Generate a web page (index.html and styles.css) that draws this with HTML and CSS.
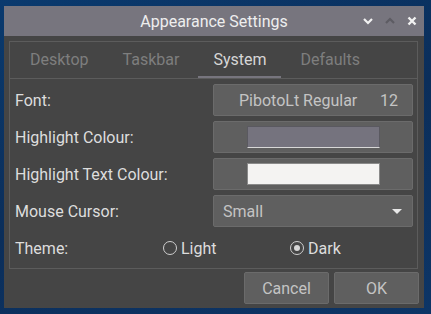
FILE: index.html
```html
<!DOCTYPE html>
<html lang="en">
<head>
    <meta charset="UTF-8">
    <title>Appearance Settings</title>
    <link rel="stylesheet" href="styles.css">
</head>
<body>
    <div class="window">
        <div class="titlebar">
            <span class="title">Appearance Settings</span>
            <div class="controls">
                <svg class="ctl" width="10" height="8" viewBox="0 0 10 8"><path d="M1 2 L5 6 L9 2" stroke="#f2f2f2" stroke-width="2.2" fill="none"/></svg>
                <svg class="ctl dim" width="10" height="8" viewBox="0 0 10 8"><path d="M1 6 L5 2 L9 6" stroke="#5d5c63" stroke-width="2.2" fill="none"/></svg>
                <svg class="ctl" width="10" height="10" viewBox="0 0 10 10"><path d="M1.5 1.5 L8.5 8.5 M8.5 1.5 L1.5 8.5" stroke="#f2f2f2" stroke-width="2.4" fill="none"/></svg>
            </div>
        </div>
        <div class="notebook">
            <div class="tabs">
                <span class="tab">Desktop</span>
                <span class="tab">Taskbar</span>
                <span class="tab active">System</span>
                <span class="tab">Defaults</span>
            </div>
            <div class="page">
                <div class="row">
                    <span class="label">Font:</span>
                    <div class="btn font-btn"><span>PibotoLt Regular</span><span class="size">12</span></div>
                </div>
                <div class="row">
                    <span class="label">Highlight Colour:</span>
                    <div class="btn swatch-btn"><span class="swatch hl"></span></div>
                </div>
                <div class="row">
                    <span class="label">Highlight Text Colour:</span>
                    <div class="btn swatch-btn"><span class="swatch hl-text"></span></div>
                </div>
                <div class="row">
                    <span class="label">Mouse Cursor:</span>
                    <div class="btn combo"><span>Small</span><span class="arrow"></span></div>
                </div>
                <div class="row">
                    <span class="label theme-label">Theme:</span>
                    <label class="radio light"><span class="dot"></span>Light</label>
                    <label class="radio"><span class="dot checked"></span>Dark</label>
                </div>
            </div>
        </div>
        <div class="actions">
            <div class="btn action">Cancel</div>
            <div class="btn action">OK</div>
        </div>
    </div>
</body>
</html>
```
FILE: styles.css
```css
body {
    margin: 0;
    width: 431px;
    height: 314px;
    overflow: hidden;
    background: linear-gradient(160deg, #0a3a6e 0%, #0b2e5a 50%, #0d3566 100%);
    font-family: Roboto, 'Liberation Sans', sans-serif;
}
.window {
    margin: 6px 0 0 4px;
    width: 420px;
    height: 302px;
    background: #454545;
}
.titlebar {
    height: 30px;
    background: #77757e;
    position: relative;
    display: flex;
    align-items: center;
    justify-content: center;
}
.title {
    color: #eeeeee;
    font-size: 16px;
}
.controls {
    position: absolute;
    right: 7px;
    top: 0;
    height: 30px;
    display: flex;
    align-items: center;
    gap: 12px;
}
.notebook {
    margin: 5px 6px 0 5px;
    border: 1px solid #5c5c5c;
    height: 226px;
}
.tabs {
    height: 36px;
    border-bottom: 1px solid #5c5c5c;
    display: flex;
    padding-left: 5px;
    gap: 4px;
}
.tab {
    padding: 0 15px;
    font-size: 16px;
    color: #7e7e7e;
    line-height: 36px;
    height: 34px;
    border-bottom: 2px solid transparent;
}
.tab.active {
    color: #d6d6d6;
    border-bottom-color: #77757e;
}
.page {
    padding: 5px 4px 5px 5px;
    display: flex;
    flex-direction: column;
    gap: 5px;
}
.row {
    height: 32px;
    display: flex;
    align-items: center;
}
.label {
    flex: 1;
    color: #dddddd;
    font-size: 16px;
}
.btn {
    box-sizing: border-box;
    height: 32px;
    background: #5f5f5f;
    border: 1px solid #6b6b6b;
    border-radius: 2px;
    color: #c4c4c4;
    font-size: 16px;
    display: flex;
    align-items: center;
}
.row .btn {
    width: 200px;
}
.font-btn {
    padding: 0 14px 0 25px;
}
.font-btn .size {
    margin-left: auto;
}
.swatch-btn {
    justify-content: center;
}
.swatch {
    width: 133px;
    height: 22px;
    box-sizing: border-box;
}
.swatch.hl {
    background: #75737e;
    border: 1px solid #5a5960;
    border-bottom: 1px solid #d8d8d8;
}
.swatch.hl-text {
    background: #f4f3f2;
    border: 1px solid #8a8a8a;
}
.combo {
    padding: 0 10px 0 9px;
    justify-content: space-between;
}
.arrow {
    width: 0;
    height: 0;
    border-left: 5px solid transparent;
    border-right: 5px solid transparent;
    border-top: 5px solid #e8e8e8;
}
.theme-label {
    flex: 0 0 148px;
}
.radio {
    display: flex;
    align-items: center;
    gap: 4px;
    color: #dddddd;
    font-size: 16px;
}
.radio.light {
    width: 127px;
}
.dot {
    width: 12px;
    height: 12px;
    border: 1px solid #cfcfcf;
    border-radius: 50%;
    display: flex;
    align-items: center;
    justify-content: center;
}
.dot.checked::after {
    content: "";
    width: 6px;
    height: 6px;
    border-radius: 50%;
    background: #d6d6d6;
}
.actions {
    display: flex;
    justify-content: flex-end;
    gap: 5px;
    padding: 3px 5px 0 0;
}
.btn.action {
    width: 85px;
    justify-content: center;
}
```
